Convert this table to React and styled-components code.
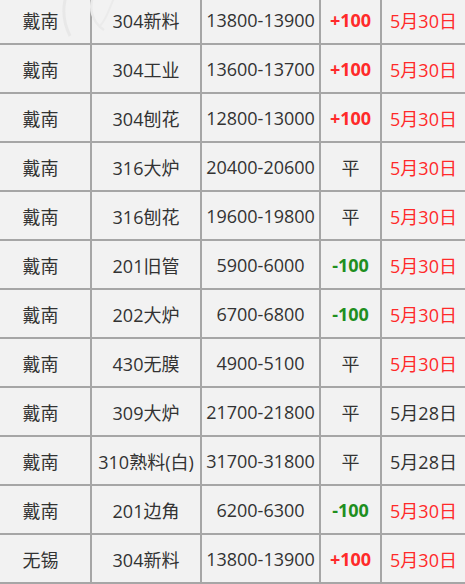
import React from "react";
import styled, { createGlobalStyle } from "styled-components";

const GlobalStyle = createGlobalStyle`
    html, body {
        margin: 0;
        padding: 0;
        background: #f2f2f2;
        overflow: hidden;
    }
`;

const Page = styled.div`
    position: relative;
    width: 465px;
    height: 584px;
    overflow: hidden;
    background: #f2f2f2;
    font-family: "Open Sans", "Noto Sans CJK SC", sans-serif;
`;

const PriceTable = styled.table`
    border-collapse: collapse;
    table-layout: fixed;
    width: 476px;
    margin: -6px 0 0 -11px;
    color: #333;
    font-size: 18px;
`;

const Col = styled.col`
    width: ${(p) => p.$w}px;
`;

const Cell = styled.td`
    height: 47px;
    padding: 0;
    text-align: center;
    border: 2px solid #a6a6a6;
    white-space: nowrap;
    color: ${(p) => p.$color || "#333"};
    font-weight: ${(p) => (p.$bold ? 700 : 400)};
`;

const Watermark = styled.svg`
    position: absolute;
    left: 62px;
    top: -6px;
    pointer-events: none;
`;

const RED = "#ff2a2a";
const GREEN = "#1f8f1f";
const widths = [101, 110, 119, 61, 85];

const rows = [
    ["戴南", "304新料", "13800-13900", "+100", "5月30日"],
    ["戴南", "304工业", "13600-13700", "+100", "5月30日"],
    ["戴南", "304刨花", "12800-13000", "+100", "5月30日"],
    ["戴南", "316大炉", "20400-20600", "平", "5月30日"],
    ["戴南", "316刨花", "19600-19800", "平", "5月30日"],
    ["戴南", "201旧管", "5900-6000", "-100", "5月30日"],
    ["戴南", "202大炉", "6700-6800", "-100", "5月30日"],
    ["戴南", "430无膜", "4900-5100", "平", "5月30日"],
    ["戴南", "309大炉", "21700-21800", "平", "5月28日"],
    ["戴南", "310熟料(白)", "31700-31800", "平", "5月28日"],
    ["戴南", "201边角", "6200-6300", "-100", "5月30日"],
    ["无锡", "304新料", "13800-13900", "+100", "5月30日"],
];

const changeColor = (c) => (c.startsWith("+") ? RED : c.startsWith("-") ? GREEN : "#333");

const App = () => {
    return (
        <Page>
            <GlobalStyle />
            <PriceTable>
                <colgroup>
                    {widths.map((w, i) => (
                        <Col key={i} $w={w} />
                    ))}
                </colgroup>
                <tbody>
                    {rows.map(([city, name, price, change, date], i) => (
                        <tr key={i}>
                            <Cell>{city}</Cell>
                            <Cell>{name}</Cell>
                            <Cell>{price}</Cell>
                            <Cell $color={changeColor(change)} $bold={change !== "平"}>
                                {change}
                            </Cell>
                            <Cell $color={date === "5月30日" ? RED : "#333"}>{date}</Cell>
                        </tr>
                    ))}
                </tbody>
            </PriceTable>
            <Watermark width="60" height="50" viewBox="0 0 60 50">
                <path d="M4 2 C 0 16, 2 30, 8 42" fill="none" stroke="#e8e8e8" strokeWidth="3" />
                <path d="M32 0 C 26 14, 30 28, 42 36" fill="none" stroke="#eaeaea" strokeWidth="2.5" />
                <path d="M52 4 C 46 18, 44 26, 38 32" fill="none" stroke="#ebebeb" strokeWidth="2" />
            </Watermark>
        </Page>
    );
};

export default App;
